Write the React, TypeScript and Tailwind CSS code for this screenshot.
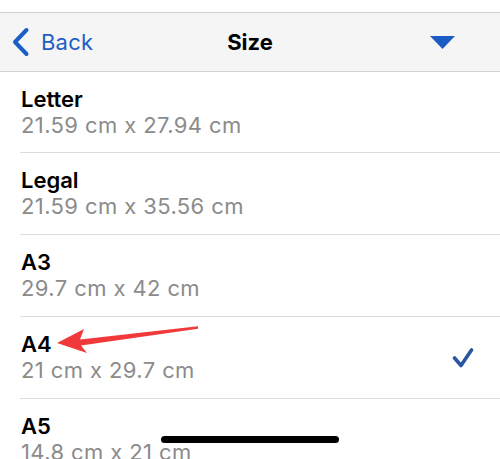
import React from 'react';

type PaperSize = {
  name: string;
  dims: string;
  selected?: boolean;
};

const sizes: PaperSize[] = [
  { name: 'Letter', dims: '21.59 cm x 27.94 cm' },
  { name: 'Legal', dims: '21.59 cm x 35.56 cm' },
  { name: 'A3', dims: '29.7 cm x 42 cm' },
  { name: 'A4', dims: '21 cm x 29.7 cm', selected: true },
  { name: 'A5', dims: '14.8 cm x 21 cm' },
];

const App: React.FC = () => {
  return (
    <div className="relative w-[500px] h-[459px] overflow-hidden bg-white font-['Inter','Liberation_Sans',sans-serif]">
      {/* Status bar gap */}
      <div className="h-[12px]" />

      {/* Nav bar */}
      <header className="h-[60px] grid grid-cols-[1fr_auto_1fr] items-center bg-[#f5f5f5] border-y border-[#d2d2d2]">
        <div className="flex items-center pl-[11px] text-[#1d5ec6]">
          <svg width="19" height="30" viewBox="0 0 19 30" className="mr-[11px]">
            <path d="M15.5 3 L4 15 L15.5 27" fill="none" stroke="currentColor" strokeWidth="4" strokeLinecap="round" strokeLinejoin="round" />
          </svg>
          <span className="text-[22px] leading-none tracking-[0.2px]">Back</span>
        </div>
        <h1 className="text-[22px] font-bold leading-none text-black">Size</h1>
        <div className="flex justify-end pr-[45px]">
          <svg width="25" height="13" viewBox="0 0 25 13">
            <path d="M0 0 H25 L12.5 13 Z" fill="#1d5cc6" />
          </svg>
        </div>
      </header>

      {/* Size list */}
      <ul>
        {sizes.map((s, i) => (
          <li key={s.name} className="pl-[20px]">
            <div
              className={`flex items-center justify-between border-b border-[#dcdcdc] ${
                i === 0 ? 'h-[81px]' : 'h-[82px]'
              }`}
            >
              <div className="self-start pt-[17px] pl-[1px]">
                <div className="text-[22px] font-semibold leading-[20px] text-black">{s.name}</div>
                <div className="text-[22px] leading-[20px] tracking-[0.4px] text-[#8b8b8b] mt-[6px]">{s.dims}</div>
              </div>
              {s.selected && (
                <svg width="22" height="22" viewBox="0 0 22 22" className="mr-[26px]">
                  <path d="M2.5 11 L9 18.5 L19.5 3" fill="none" stroke="#2b56a1" strokeWidth="3.6" strokeLinecap="round" strokeLinejoin="round" />
                </svg>
              )}
            </div>
          </li>
        ))}
      </ul>

      {/* Annotation arrow */}
      <svg className="absolute inset-0 pointer-events-none" width="500" height="459" viewBox="0 0 500 459">
        <polygon
          points="57,343 84,329 80,339.5 198,326.3 198,328.7 81,345.5 87,353"
          fill="#f1393b"
        />
      </svg>

      {/* Home indicator */}
      <div className="absolute left-[161px] top-[436px] w-[178px] h-[7px] rounded-full bg-black" />
    </div>
  );
};

export default App;
